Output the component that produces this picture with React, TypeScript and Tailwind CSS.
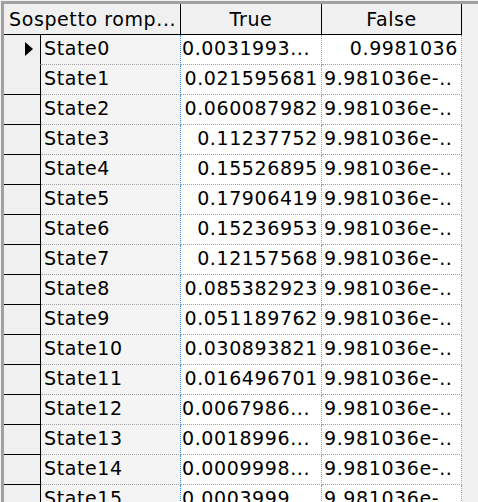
import React from 'react'

const rows: [string, string, string][] = [
  ['State0', '0.0031993...', '0.9981036'],
  ['State1', '0.021595681', '9.981036e-..'],
  ['State2', '0.060087982', '9.981036e-..'],
  ['State3', '0.11237752', '9.981036e-..'],
  ['State4', '0.15526895', '9.981036e-..'],
  ['State5', '0.17906419', '9.981036e-..'],
  ['State6', '0.15236953', '9.981036e-..'],
  ['State7', '0.12157568', '9.981036e-..'],
  ['State8', '0.085382923', '9.981036e-..'],
  ['State9', '0.051189762', '9.981036e-..'],
  ['State10', '0.030893821', '9.981036e-..'],
  ['State11', '0.016496701', '9.981036e-..'],
  ['State12', '0.0067986...', '9.981036e-..'],
  ['State13', '0.0018996...', '9.981036e-..'],
  ['State14', '0.0009998...', '9.981036e-..'],
  ['State15', '0.0003999...', '9.981036e-..'],
]

function Row({ cells, index }: { cells: [string, string, string]; index: number }) {
  const [name, t, f] = cells
  const truncT = t.endsWith('...')
  const truncF = f.endsWith('..')
  return (
    <div className="flex h-[30px] shrink-0">
      <div
        className={`w-[37px] shrink-0 bg-[#f0f0f0] border-r border-b border-solid border-r-black ${
          index === 0 ? 'border-b-[#f0f0f0]' : 'border-b-black'
        } flex items-center pl-[21px] pb-[2px]`}
      >
        {index === 0 && (
          <svg width="8" height="14" viewBox="0 0 8 14">
            <path d="M0 0 L8 7 L0 14 Z" fill="#000" />
          </svg>
        )}
      </div>
      <div className="w-[140px] shrink-0 bg-[#f4f4f4] border-r border-b border-dotted border-r-[#3c8fe8] border-b-[#a0a0a0] flex items-center pl-[3px] pb-[2px] whitespace-nowrap overflow-hidden">
        {name}
      </div>
      <div
        className={`w-[141px] shrink-0 bg-white border-r border-b border-dotted border-[#a0a0a0] flex items-center pb-[2px] whitespace-nowrap overflow-hidden ${
          truncT ? 'justify-start pl-[1px]' : 'justify-end pr-[3px]'
        }`}
      >
        {t}
      </div>
      <div
        className={`w-[140px] shrink-0 bg-white border-r border-b border-dotted border-[#a0a0a0] flex items-center pb-[2px] whitespace-nowrap overflow-hidden ${
          truncF ? 'justify-start pl-[2px]' : 'justify-end pr-[3px]'
        }`}
      >
        {f}
      </div>
    </div>
  )
}

export default function App() {
  return (
    <div
      className="w-[478px] h-[502px] bg-[#f0f0f0] overflow-hidden pt-px pl-px text-black text-[19px] leading-none tracking-[0.6px]"
      style={{ fontFamily: '"DejaVu Sans", Verdana, sans-serif' }}
    >
      <div className="h-full border-t-[3px] border-l-[3px] border-[#a0a0a0] flex flex-col">
        <div className="flex h-[31px] shrink-0">
          <div className="w-[177px] shrink-0 bg-[#f0f0f0] border-r border-b border-black flex items-center pl-[5px] whitespace-nowrap overflow-hidden">
            Sospetto romp...
          </div>
          <div className="w-[141px] shrink-0 bg-[#f0f0f0] border-r border-b border-black flex items-center justify-center">
            True
          </div>
          <div className="w-[140px] shrink-0 bg-[#f0f0f0] border-r border-b border-black flex items-center justify-center">
            False
          </div>
        </div>
        {rows.map((r, i) => (
          <Row key={r[0]} cells={r} index={i} />
        ))}
      </div>
    </div>
  )
}
